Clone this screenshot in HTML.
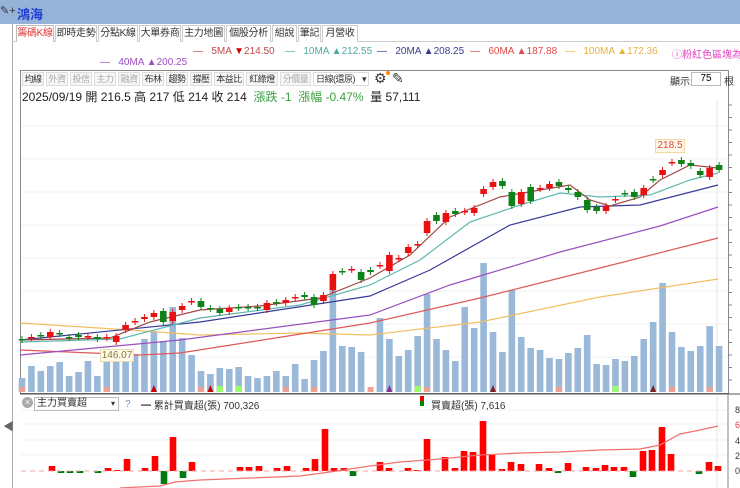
<!DOCTYPE html>
<html><head><meta charset="utf-8"><style>
*{margin:0;padding:0;box-sizing:border-box}
body{width:740px;height:488px;overflow:hidden;background:#fff;font-family:"Liberation Sans","Noto Sans CJK TC",sans-serif;position:relative}
.abs{position:absolute;white-space:nowrap}
.top{left:0;top:0;width:740px;height:24px;background:#95b3d7}
.tab{position:absolute;top:25px;height:17px;border:1px solid #ccc;border-bottom:none;font-size:10px;line-height:15px;text-align:center;color:#333;background:#fff;white-space:nowrap;overflow:hidden;letter-spacing:-0.3px}
.lg{font-size:10px;top:46px}
.btn{position:absolute;top:72px;height:14px;border:1px solid #ddd;background:#f6f6f6;font-size:9px;line-height:12px;text-align:center;color:#333;white-space:nowrap;overflow:hidden;letter-spacing:-0.5px}
.dis{color:#aaa}
</style></head><body>
<div class="abs top"></div>
<div class="abs" style="left:0;top:4px;font-size:11px;color:#333">✎+</div>
<div class="abs" style="left:17px;top:4px;font-size:13px;font-weight:bold;color:#1f3fd6">鴻海</div>
<div class="abs" style="left:12px;top:24px;width:1px;height:464px;background:#aaa"></div>
<div class="abs" style="left:12px;top:41px;width:728px;height:1px;background:#ccc"></div>
<div class="tab" style="left:16px;width:38px;color:#e03a3a;border-color:#bbb">籌碼K線</div>
<div class="tab" style="left:55px;width:42px">即時走勢</div>
<div class="tab" style="left:98px;width:40px">分點K線</div>
<div class="tab" style="left:139px;width:42px">大單券商</div>
<div class="tab" style="left:182px;width:43px">主力地圖</div>
<div class="tab" style="left:226px;width:45px">個股分析</div>
<div class="tab" style="left:272px;width:25px">組說</div>
<div class="tab" style="left:298px;width:23px">筆記</div>
<div class="tab" style="left:322px;width:36px">月營收</div>
<div class="abs lg" style="left:193px;color:#c04848">—&nbsp;&nbsp;&nbsp;5MA <span style="color:#c00">▼</span>214.50</div>
<div class="abs lg" style="left:285px;color:#4fa8a0">—&nbsp;&nbsp;&nbsp;10MA ▲212.55</div>
<div class="abs lg" style="left:377px;color:#3a3a90">—&nbsp;&nbsp;&nbsp;20MA ▲208.25</div>
<div class="abs lg" style="left:470px;color:#e04848">—&nbsp;&nbsp;&nbsp;60MA ▲187.88</div>
<div class="abs lg" style="left:565px;color:#e8b040">—&nbsp;&nbsp;&nbsp;100MA ▲172.36</div>
<div class="abs lg" style="left:672px;color:#e040c0">ⓘ粉紅色區塊為量</div>
<div class="abs lg" style="left:100px;top:57px;color:#9a4ec0">—&nbsp;&nbsp;&nbsp;40MA ▲200.25</div>
<div class="abs" style="left:20px;top:70px;width:709px;height:324px;border:1px solid #888;border-bottom:1px solid #666"></div>
<div class="btn" style="left:22px;width:22px">均線</div>
<div class="btn dis" style="left:46px;width:22px">外資</div>
<div class="btn dis" style="left:70px;width:22px">投信</div>
<div class="btn dis" style="left:94px;width:22px">主力</div>
<div class="btn dis" style="left:118px;width:22px">融資</div>
<div class="btn" style="left:142px;width:22px">布林</div>
<div class="btn" style="left:166px;width:22px">趨勢</div>
<div class="btn" style="left:190px;width:22px">撐壓</div>
<div class="btn" style="left:214px;width:30px">本益比</div>
<div class="btn" style="left:246px;width:32px">紅綠燈</div>
<div class="btn dis" style="left:280px;width:31px">分價量</div>
<div class="btn" style="left:313px;width:56px;text-align:left;padding-left:2px;background:#fff">日線(還原)<span style="position:absolute;right:2px">▾</span></div>
<div class="abs" style="left:374px;top:70px;font-size:14px;color:#333">⚙</div>
<div class="abs" style="left:386px;top:71px;width:4px;height:4px;border-radius:2px;background:#f80"></div>
<div class="abs" style="left:392px;top:70px;font-size:14px;color:#333">✎</div>
<div class="abs" style="left:670px;top:73px;font-size:10px;color:#333">顯示:</div>
<div class="abs" style="left:691px;top:72px;width:30px;height:14px;border:1px solid #bbb;font-size:10px;line-height:12px;text-align:center">75</div>
<div class="abs" style="left:724px;top:73px;font-size:10px;color:#333">根</div>
<div class="abs" style="left:22px;top:88px;font-size:12px;color:#222">2025/09/19 開 216.5 高 217 低 214 收 214 <span style="color:#3aa040">&nbsp;漲跌 -1 &nbsp;漲幅 -0.47%</span> &nbsp;量 57,111</div>
<svg class="abs" style="left:0;top:0" width="740" height="488" id="s"></svg>
<div class="abs" style="left:655px;top:139px;width:30px;height:14px;border:1px solid #f0d8a0;background:#fffbe8;font-size:10px;line-height:12px;text-align:center;color:#e04040">218.5</div>
<div class="abs" style="left:100px;top:349px;width:34px;height:13px;border:1px solid #e8dcb0;background:#fffbe8;font-size:10px;line-height:11px;text-align:center;color:#8a7a40">146.07</div>
<div class="abs" style="left:22px;top:397px;width:11px;height:11px;border-radius:6px;background:#aaa;color:#fff;font-size:9px;line-height:11px;text-align:center">×</div>
<div class="abs" style="left:34px;top:397px;width:85px;height:14px;border:1px solid #bbb;font-size:10px;line-height:12px;padding-left:2px;color:#333">主力買賣超<span style="position:absolute;right:3px;font-size:8px">▾</span></div>
<div class="abs" style="left:125px;top:399px;font-size:10px;color:#6a9ad0">?</div>
<div class="abs" style="left:141px;top:397px;font-size:10px;color:#333">━ 累計買賣超(張) 700,326</div>
<div class="abs" style="left:420px;top:396px;width:4px;height:5px;background:#e00"></div>
<div class="abs" style="left:420px;top:401px;width:4px;height:5px;background:#080"></div>
<div class="abs" style="left:431px;top:397px;font-size:10px;color:#333">買賣超(張) 7,616</div>
<div class="abs" style="left:3px;top:418px;font-size:11px;color:#666">◀</div>
<div class="abs" style="left:735px;top:405px;font-size:9px;color:#333">8</div>
<div class="abs" style="left:735px;top:420px;font-size:9px;color:#e04040">6</div>
<div class="abs" style="left:735px;top:436px;font-size:9px;color:#333">4</div>
<div class="abs" style="left:735px;top:451px;font-size:9px;color:#333">2</div>
<div class="abs" style="left:735px;top:466px;font-size:9px;color:#333">0</div>
<script>
var s=document.getElementById('s'),h='';
function X(i){return 22+i*9.42}
var C=[[339,340,'g'],[337,338,'r'],[335,336,'g'],[332,337,'r'],[333,334,'g'],[337,338,'g'],[335,337,'g'],[336,337,'r'],[337,339,'g'],[337,338,'r'],[336,342,'r'],[325,330,'r'],[321,322,'r'],[317,319,'r'],[313,317,'r'],[311,322,'g'],[312,321,'r'],[306,310,'r'],[301,302,'r'],[301,307,'g'],[308,309,'g'],[309,313,'g'],[308,312,'r'],[307,308,'g'],[307,308,'g'],[307,308,'g'],[303,310,'r'],[302,303,'g'],[300,303,'r'],[297,298,'r'],[295,297,'g'],[297,305,'g'],[295,301,'r'],[274,290,'r'],[271,272,'g'],[269,270,'r'],[272,280,'g'],[270,272,'g'],
[265,266,'r'],[255,271,'r'],[258,259,'r'],[247,253,'r'],[244,245,'r'],[221,233,'r'],[215,221,'g'],[213,222,'r'],[211,214,'g'],[211,212,'r'],[208,213,'r'],[189,194,'r'],[182,187,'r'],[181,186,'g'],[192,206,'g'],[192,204,'r'],[187,201,'g'],[188,189,'r'],[184,188,'r'],[182,186,'g'],[188,190,'g'],[192,197,'g'],[200,210,'g'],[207,211,'g'],[206,211,'r'],[199,200,'r'],[193,194,'g'],[192,197,'g'],[188,195,'r'],[179,180,'g'],[170,175,'r'],[162,163,'r'],[160,164,'g'],[163,166,'g'],[171,175,'g'],[168,177,'r'],[165,170,'g']];
var V=[378,366,371,366,362,376,372,361,376,353,357,350,354,339,331,341,307,338,355,371,374,368,369,367,376,378,376,371,376,364,379,360,351,290,346,347,352,392,
318,339,356,350,336,294,339,350,361,307,328,263,332,352,290,337,348,350,358,359,353,348,335,364,365,359,361,356,339,322,283,332,347,351,346,326,346];
[126,159,192,225,258,291,324,357].forEach(function(y){h+='<line x1="21" x2="728" y1="'+y+'" y2="'+y+'" stroke="#f0f0f0"/>'});
h+='<line x1="717" x2="717" y1="100" y2="488" stroke="#e4e4e4"/>';
for(var y=105;y<392;y+=12.5)h+='<line x1="728" x2="732" y1="'+y+'" y2="'+y+'" stroke="#888"/>';
V.forEach(function(v,i){h+='<rect x="'+(X(i)-3.3)+'" y="'+v+'" width="6.6" height="'+(392-v)+'" fill="#9ab8d8"/>'});
[0,9,19,28,31,37,42,43,57,69,73].forEach(function(i){h+='<rect x="'+(X(i)-3)+'" y="387" width="6" height="5" fill="#f0a090"/>'});
[[14,'#c00'],[20,'#c00'],[39,'#8a3090'],[50,'#7a2020'],[67,'#7a2020']].forEach(function(a){var x=X(a[0]);h+='<polygon points="'+(x-3)+',392 '+(x+3)+',392 '+x+',385" fill="'+a[1]+'"/>'});
[21,23,42,63].forEach(function(i){h+='<rect x="'+(X(i)-3)+'" y="386" width="6" height="6" fill="#9f6"/>'});
function pl(p,c){h+='<polyline fill="none" stroke="'+c+'" stroke-width="1.2" points="'+p+'"/>'}
pl('20,323 130,330 200,335 300,333 370,335 480,322 600,297 718,279','#f0c060');
pl('20,350 140,355 180,353 250,342 370,323 480,298 600,268 718,238','#e05858');
pl('20,355 180,340 370,315 450,285 560,252 660,226 718,207','#9a50c0');
pl('20,340 200,322 370,296 430,270 510,225 580,207 640,205 718,185','#3a3a9a');
pl('20,342 120,339 200,318 300,305 370,285 420,260 470,222 520,205 560,193 600,197 650,195 690,180 718,173','#5fb8b0');
pl('20,340 110,338 150,322 200,310 260,306 320,298 370,278 410,255 450,217 500,197 540,190 570,185 590,200 610,206 640,197 660,180 690,165 718,168','#a04848');
C.forEach(function(c,i){var x=X(i),col=c[2]=='r'?'#e81010':'#108018';h+='<line x1="'+x+'" x2="'+x+'" y1="'+(c[0]-3)+'" y2="'+(c[1]+3)+'" stroke="'+col+'"/>';var hh=Math.max(1.5,c[1]-c[0]);h+='<rect x="'+(x-3.3)+'" y="'+c[0]+'" width="6.6" height="'+hh+'" fill="'+col+'"/>'});
h+='<line x1="20" x2="740" y1="394" y2="394" stroke="#555"/>';
[410,424,440,455].forEach(function(y){h+='<line x1="21" x2="728" y1="'+y+'" y2="'+y+'" stroke="#f0f0f0"/>'});
h+='<line x1="728" x2="728" y1="394" y2="488" stroke="#888"/>';
var L={52:466,61:-473,70:-473,80:-473,98:-473,108:468,117:470,127:459,145:468,155:456,164:-484,173:437,183:-478,192:462,240:467,249:467,259:466,277:468,287:466,306:468,315:459,325:429,334:468,344:468,353:-476,380:462,389:468,408:468,417:470,427:439,445:457,455:468,464:451,473:452,483:421,492:455,502:469,511:462,521:464,539:464,549:468,558:-473,568:463,586:467,596:468,605:465,614:467,624:467,633:-477,643:451,652:450,662:427,671:454,699:-474,709:462,718:466};
for(var k in L){var v=L[k],x=+k;if(v>0)h+='<rect x="'+(x-3.3)+'" y="'+v+'" width="6.6" height="'+(471-v)+'" fill="#f00"/>';else h+='<rect x="'+(x-3.3)+'" y="471" width="6.6" height="'+(-v-471)+'" fill="#007a10"/>'}
h+='<line x1="21" x2="718" y1="471" y2="471" stroke="#f4a0a0" stroke-dasharray="5,4"/>';
pl('120,488 160,486 175,482 200,480 250,478 300,476 330,472 370,466 400,462 440,459 480,455 520,453 560,452 600,450 640,449 660,445 680,434 700,430 718,426','#f07070');
s.innerHTML=h;
</script>
</body></html>
